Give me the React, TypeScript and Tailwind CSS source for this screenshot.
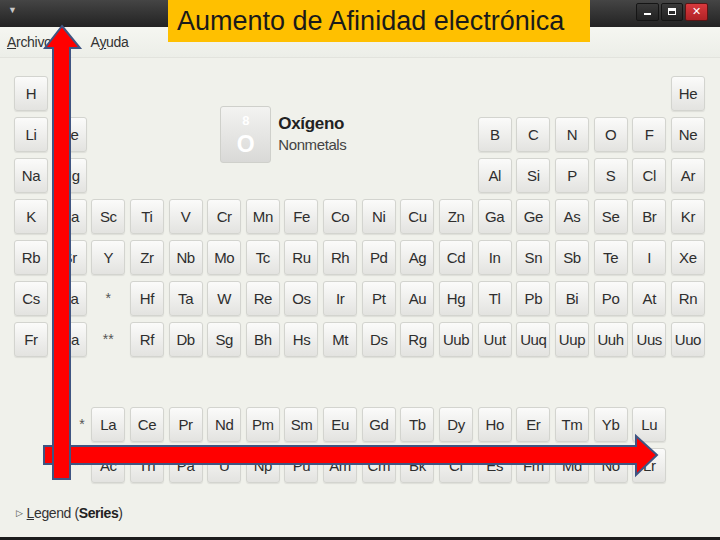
import React from "react";

const rows: string[][] = [
  ["H", "", "", "", "", "", "", "", "", "", "", "", "", "", "", "", "", "He"],
  ["Li", "Be", "", "", "", "", "", "", "", "", "", "", "B", "C", "N", "O", "F", "Ne"],
  ["Na", "Mg", "", "", "", "", "", "", "", "", "", "", "Al", "Si", "P", "S", "Cl", "Ar"],
  ["K", "Ca", "Sc", "Ti", "V", "Cr", "Mn", "Fe", "Co", "Ni", "Cu", "Zn", "Ga", "Ge", "As", "Se", "Br", "Kr"],
  ["Rb", "Sr", "Y", "Zr", "Nb", "Mo", "Tc", "Ru", "Rh", "Pd", "Ag", "Cd", "In", "Sn", "Sb", "Te", "I", "Xe"],
  ["Cs", "Ba", "*", "Hf", "Ta", "W", "Re", "Os", "Ir", "Pt", "Au", "Hg", "Tl", "Pb", "Bi", "Po", "At", "Rn"],
  ["Fr", "Ra", "**", "Rf", "Db", "Sg", "Bh", "Hs", "Mt", "Ds", "Rg", "Uub", "Uut", "Uuq", "Uup", "Uuh", "Uus", "Uuo"],
];

const lan = ["La", "Ce", "Pr", "Nd", "Pm", "Sm", "Eu", "Gd", "Tb", "Dy", "Ho", "Er", "Tm", "Yb", "Lu"];
const act = ["Ac", "Th", "Pa", "U", "Np", "Pu", "Am", "Cm", "Bk", "Cf", "Es", "Fm", "Md", "No", "Lr"];

const font = { fontFamily: '"Liberation Sans", Arial, sans-serif' };

function Cell({ s }: { s: string }) {
  return (
    <div className="w-[34px] h-[35px] rounded-[3px] border border-[#d3d4cf] bg-gradient-to-b from-[#fbfbfa] to-[#e3e3e0] shadow-[0_1px_1px_rgba(0,0,0,0.08)] flex items-center justify-center text-[15px] text-[#2e2e2e] leading-none whitespace-nowrap tracking-[-0.4px]">
      {s}
    </div>
  );
}

function Star({ s, right }: { s: string; right?: boolean }) {
  return (
    <div className={`w-[34px] h-[35px] flex items-center ${right ? "justify-end pr-[2px]" : "justify-center"} text-[14px] text-[#555]`}>
      {s}
    </div>
  );
}

export default function App() {
  return (
    <div className="relative w-[720px] h-[540px] overflow-hidden bg-[#f0f1eb]" style={font}>
      {/* title bar */}
      <div className="h-[27px] bg-gradient-to-b from-[#454545] to-[#232323] flex items-center justify-between px-[6px]">
        <span className="text-[#c8c8c8] text-[9px] ml-[2px] -mt-[6px]">▼</span>
        <div className="flex gap-[2px] mr-[6px] -mt-[4px]">
          <div className="w-[23px] h-[18px] rounded-[2px] border border-[#151515] bg-gradient-to-b from-[#3a3a3a] to-[#222] flex items-end justify-center pb-[5px]">
            <div className="w-[7px] h-[2px] bg-white" />
          </div>
          <div className="w-[22px] h-[18px] rounded-[2px] border border-[#151515] bg-gradient-to-b from-[#3a3a3a] to-[#222] flex items-center justify-center">
            <div className="w-[8px] h-[7px] border border-white border-t-[3px]" />
          </div>
          <div className="w-[23px] h-[18px] rounded-[2px] border border-[#5a1515] bg-gradient-to-b from-[#d8393d] to-[#b02226] flex items-center justify-center text-white text-[11px] leading-none">
            ✕
          </div>
        </div>
      </div>
      {/* menu bar */}
      <div className="h-[31px] bg-gradient-to-b from-[#f5f6f1] to-[#eceee8] border-b border-[#e2e3dd] flex items-center px-[7px] text-[14px] text-[#333] tracking-[-0.3px]">
        <span>
          <span className="underline">A</span>rchivo
        </span>
        <span className="ml-[39px]">
          A<span className="underline">y</span>uda
        </span>
      </div>
      {/* content */}
      <div className="pl-[14px] pt-[18px]">
        <div className="grid grid-cols-[repeat(18,34px)] gap-x-[4.65px] gap-y-[6px]">
          {rows.map((r, ri) =>
            r.map((s, ci) => {
              if (!s) return null;
              const style = { gridRow: ri + 1, gridColumn: ci + 1 };
              return (
                <div key={ri + "-" + ci} style={style}>
                  {s.startsWith("*") ? <Star s={s} /> : <Cell s={s} />}
                </div>
              );
            })
          )}
          <div className="col-start-3 col-span-10 row-start-1 row-span-3 flex items-center pl-[129px]">
            <div className="w-[51px] h-[57px] rounded-[3px] border border-[#cfd0cb] bg-gradient-to-b from-[#f3f3f1] to-[#d9d9d7] flex flex-col items-center justify-center text-white leading-none font-bold">
              <span className="text-[13px] mb-[6px]">8</span>
              <span className="text-[23px]">O</span>
            </div>
            <div className="ml-[7px] flex flex-col -mt-[1px]">
              <span className="text-[17px] font-bold text-[#222] leading-[22px] tracking-[-0.3px]">Oxígeno</span>
              <span className="text-[15px] text-[#444] leading-[20px] tracking-[-0.4px]">Nonmetals</span>
            </div>
          </div>
        </div>
        <div className="mt-[50px] grid grid-cols-[repeat(18,34px)] gap-x-[4.65px] gap-y-[6px]">
          <div style={{ gridRow: 1, gridColumn: 2 }}>
            <Star s="*" right />
          </div>
          {lan.map((s, i) => (
            <div key={s} style={{ gridRow: 1, gridColumn: i + 3 }}>
              <Cell s={s} />
            </div>
          ))}
          <div style={{ gridRow: 2, gridColumn: 2 }}>
            <Star s="**" right />
          </div>
          {act.map((s, i) => (
            <div key={s} style={{ gridRow: 2, gridColumn: i + 3 }}>
              <Cell s={s} />
            </div>
          ))}
        </div>
        <div className="mt-[20px] flex items-center gap-[4px] text-[14px] text-[#333] ml-[2px] tracking-[-0.4px]">
          <span className="text-[9px] text-[#444]">▷</span>
          <span>
            <span className="underline">L</span>egend (<b className="text-[#222]">Series</b>)
          </span>
        </div>
      </div>
      <div className="absolute left-0 right-0 bottom-0 h-[3px] bg-[#1c1c1c]" />
      {/* overlay title */}
      <div
        className="absolute left-[168px] top-0 w-[422px] h-[42px] bg-[#ffc000] flex items-center pl-[9px] text-[27px] text-[#1a1a1a] leading-none"
        style={{ fontFamily: '"Liberation Sans", Arial, sans-serif' }}
      >
        Aumento de Afinidad electrónica
      </div>
      {/* arrows */}
      <svg className="absolute left-0 top-0 pointer-events-none" width="720" height="540" viewBox="0 0 720 540">
        <polygon
          points="44,446 636,446 636,436 657,455 636,475 636,464 44,464"
          fill="#ff0000"
          stroke="#3f5582"
          strokeWidth="2"
        />
        <polygon
          points="62,26 80,48 70,48 70,479 53,479 53,48 45,48"
          fill="#ff0000"
          stroke="#3f5582"
          strokeWidth="2"
        />
      </svg>
    </div>
  );
}
